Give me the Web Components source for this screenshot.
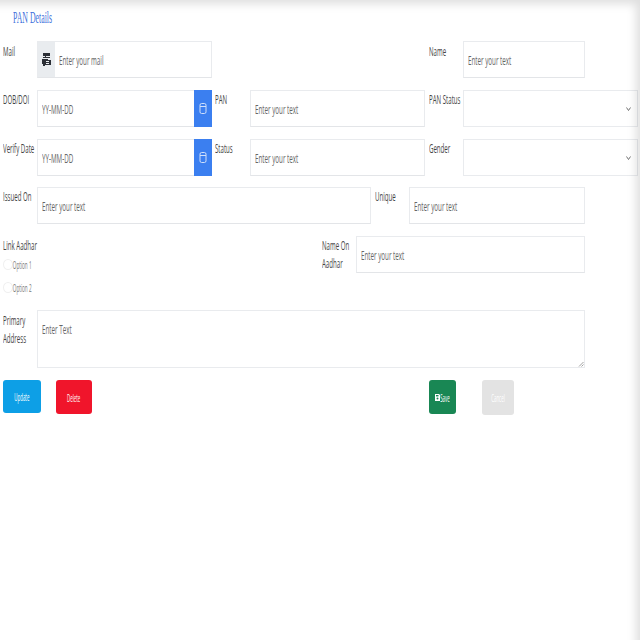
<!DOCTYPE html>
<html><head><meta charset="utf-8">
<style>
html,body{margin:0;padding:0;background:#fff;}
body{width:640px;height:640px;overflow:hidden;font-family:"Open Sans",sans-serif;position:relative;}
</style></head><body>
<template id="t-shade"><style>:host{position:absolute;inset:0;pointer-events:none;box-shadow:inset -8px 8px 10px -4px rgba(0,0,0,.13);}</style></template>
<template id="t-form"><style>:host{display:flex;flex-direction:column;padding:9px 0 0 3px;width:637px;box-sizing:border-box;}</style><slot></slot></template>
<template id="t-title"><style>:host{display:block;height:32px;padding-left:10px;font:17px/18px "Liberation Serif",serif;color:#3f72dc;}
span{display:inline-block;transform:scaleX(.46);transform-origin:left;white-space:nowrap;}</style><span><slot></slot></span></template>
<template id="t-row"><style>:host{display:grid;align-items:start;}</style><slot></slot></template>
<template id="t-label"><style>:host{display:block;font-size:13px;line-height:18px;color:#444;min-width:0;position:relative;top:var(--top,0);}
span{display:block;transform:scaleX(.47);transform-origin:left;white-space:nowrap;}</style><span><slot></slot></span></template>
<template id="t-field"><style>:host{display:flex;box-sizing:border-box;height:37px;border:1px solid #e9ebee;border-bottom-color:#e3e5e8;background:#fff;font-size:13px;color:#666;min-width:0;}
.text{flex:1;min-width:0;display:flex;align-items:center;padding:0 0 0 4px;white-space:nowrap;}
.text span{display:inline-block;transform:scaleX(.48);transform-origin:left;}
::slotted([slot=pre]),::slotted([slot=post]){flex:none;}</style><slot name="pre"></slot><div class="text"><span><slot></slot></span></div><slot name="post"></slot></template>
<template id="t-select"><style>:host{box-sizing:border-box;height:37px;border:1px solid #e9ebee;background:#fff;display:flex;align-items:center;justify-content:flex-end;padding-right:6px;}</style>
<svg width="5" height="4" viewBox="0 0 5 4"><path d="M.5.5 2.500 3.500 4.500.5" fill="none" stroke="#666" stroke-width=".9"/></svg></template>
<template id="t-addon-mail"><style>:host{display:flex;align-items:center;justify-content:center;width:17px;height:100%;background:#e9ecef;}</style>
<svg width="9" height="13" viewBox="0 0 9 13"><path d="M1 0h7v3H4v1h4v1H1V4h2V3H1zM0 6h6v1h3v5H3v1H1v-2H0z" fill="#2b2f36"/><path d="M4 8h3v1H4zM4 10h3v1H4z" fill="#e9ecef"/></svg></template>
<template id="t-addon-cal"><style>:host{display:flex;align-items:center;justify-content:center;width:18px;height:calc(100% + 2px);margin:-1px -1px -1px 0;background:#3b7ff0;}</style>
<svg width="8" height="13" viewBox="0 0 8 13"><rect x="1" y="1.500" width="6" height="10" rx="1.600" fill="none" stroke="#cfe0fb" stroke-width="1"/><path d="M1 4.500h6" stroke="#cfe0fb"/></svg></template>
<template id="t-radio"><style>:host{display:flex;align-items:center;height:23px;font-size:11px;color:#777;white-space:nowrap;position:relative;top:-1px;}
i{width:8px;height:9px;border:1px solid #f0f0f0;border-radius:50%;flex:none;}
span{display:inline-block;margin-left:-1px;padding-left:2px;transform:scaleX(.42);transform-origin:left;}</style><i></i><span><slot></slot></span></template>
<template id="t-area"><style>:host{display:block;position:relative;box-sizing:border-box;height:58px;border:1px solid #e9ebee;font-size:13px;color:#666;padding:9px 4px;line-height:18px;}
span{display:inline-block;transform:scaleX(.48);transform-origin:left;white-space:nowrap;line-height:18px;margin-top:-1px;}
svg{position:absolute;right:0;bottom:0;}</style><span><slot></slot></span>
<svg width="6" height="6" viewBox="0 0 6 6"><path d="M5.500 1 1 5.500M5.500 3.500 3.500 5.500" stroke="#888" stroke-width=".8"/></svg></template>
<template id="t-btn"><style>:host{display:flex;align-items:center;justify-content:var(--jc,center);padding-left:var(--pl,0);box-sizing:border-box;height:var(--h,34px);border-radius:3px;background:var(--bg);color:var(--fg,#fff);font-size:11px;white-space:nowrap;overflow:hidden;}
span{display:inline-block;transform:scaleX(.4);transform-origin:center;margin-left:var(--ml,0);}
::slotted(svg){flex:none;}</style><slot name="icon"></slot><span><slot></slot></span></template>

<x-form>
 <x-title>PAN Details</x-title>
 <x-row columns="34px 175px 217px 34px 122px" style="height:49px;--top:1px">
  <x-label>Mail</x-label>
  <x-field><x-addon-mail slot="pre"></x-addon-mail>Enter your mail</x-field>
  <div></div>
  <x-label>Name</x-label>
  <x-field>Enter your text</x-field>
 </x-row>
 <x-row columns="34px 175px 3px 35px 175px 4px 34px 175px" style="height:49px">
  <x-label>DOB/DOI</x-label>
  <x-field>YY-MM-DD<x-addon-cal slot="post"></x-addon-cal></x-field>
  <div></div>
  <x-label>PAN</x-label>
  <x-field>Enter your text</x-field>
  <div></div>
  <x-label>PAN Status</x-label>
  <x-select></x-select>
 </x-row>
 <x-row columns="34px 175px 3px 35px 175px 4px 34px 175px" style="height:48px">
  <x-label>Verify Date</x-label>
  <x-field>YY-MM-DD<x-addon-cal slot="post"></x-addon-cal></x-field>
  <div></div>
  <x-label>Status</x-label>
  <x-field>Enter your text</x-field>
  <div></div>
  <x-label>Gender</x-label>
  <x-select></x-select>
 </x-row>
 <x-row columns="34px 334px 4px 34px 176px" style="height:49px">
  <x-label>Issued On</x-label>
  <x-field>Enter your text</x-field>
  <div></div>
  <x-label>Unique</x-label>
  <x-field>Enter your text</x-field>
 </x-row>
 <x-row columns="319px 34px 229px" style="height:74px">
  <div>
   <x-label>Link Aadhar</x-label>
   <x-radio>Option 1</x-radio>
   <x-radio>Option 2</x-radio>
  </div>
  <x-label>Name On<br>Aadhar</x-label>
  <x-field>Enter your text</x-field>
 </x-row>
 <x-row columns="34px 548px" style="height:70px;--top:1px">
  <x-label>Primary<br>Address</x-label>
  <x-area>Enter Text</x-area>
 </x-row>
 <x-row columns="38px 15px 36px 337px 27px 26px 32px">
  <x-btn style="--bg:#0d9fe6;--h:33px">Update</x-btn>
  <div></div>
  <x-btn style="--bg:#f0152b">Delete</x-btn>
  <div></div>
  <x-btn style="--bg:#198754;--jc:flex-start;--pl:6px;--ml:-7px"><svg slot="icon" width="5" height="7" viewBox="0 0 5 7"><path d="M0 0h4l1 1v6H0z" fill="#fff"/><rect x="1" y="1" width="2.500" height="1.400" fill="#198754"/><circle cx="2.500" cy="4.600" r="1" fill="#198754"/></svg>Save</x-btn>
  <div></div>
  <x-btn style="--bg:#e3e3e3;--h:35px">Cancel</x-btn>
 </x-row>
</x-form>
<x-shade></x-shade>
<script>
function reg(name,tid,extra){
 customElements.define(name,class extends HTMLElement{
  constructor(){super();this.attachShadow({mode:'open'}).appendChild(document.getElementById(tid).content.cloneNode(true));}
  connectedCallback(){if(extra)extra(this);}
 });
}
reg('x-shade','t-shade');reg('x-form','t-form');reg('x-title','t-title');
reg('x-row','t-row',e=>{e.style.gridTemplateColumns=e.getAttribute('columns');});
reg('x-label','t-label');reg('x-field','t-field');reg('x-select','t-select');
reg('x-addon-mail','t-addon-mail');reg('x-addon-cal','t-addon-cal');
reg('x-radio','t-radio');reg('x-area','t-area');reg('x-btn','t-btn');
</script>
</body></html>
